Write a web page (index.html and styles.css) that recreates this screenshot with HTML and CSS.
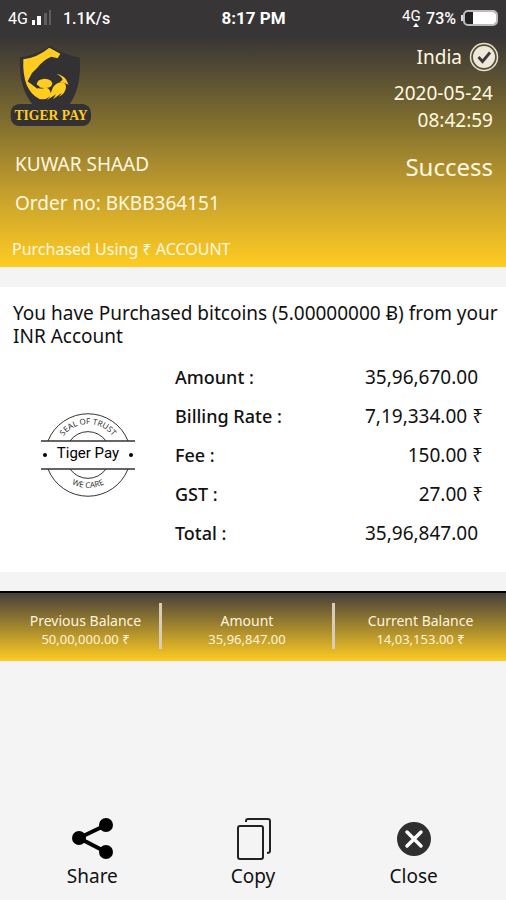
FILE: index.html
```
<!DOCTYPE html>
<html lang="en">
  <head>
    <meta charset="utf-8">
    <meta name="viewport" content="width=device-width, initial-scale=1">
    <title>Tiger Pay</title>
    <link rel="stylesheet" href="styles.css">
  </head>
  <body>
    <header class="header">
      <div class="statusbar">
        <div class="status-left">
          <span class="network">4G</span>
          <svg class="signal" width="22" height="18" viewBox="0 0 22 18">
            <path d="M1 11h3v5H1zM6 7h4v9H6z" fill="#fff"/>
            <path d="M13 4h3v12h-3zM18 1h2v15h-2z" fill="#5c6060"/>
          </svg>
          <span>1.1K/s</span>
        </div>
        <div class="clock">8:17 PM</div>
        <div class="status-right">
          <svg width="20" height="24" viewBox="0 0 20 24">
            <text x="0" y="15" class="network-small">4G</text>
            <path d="M14 17l3 4h-6z" fill="#fff"/>
          </svg>
          <span>73%</span>
          <svg width="39" height="18" viewBox="0 0 39 18">
            <path d="M2 6v6" stroke="#ddd" stroke-width="2"/>
            <rect x="4" y="2" width="33" height="14" rx="4" fill="#222" stroke="#bbb" stroke-width="2"/>
            <path d="M13 3h20q3 0 3 3v6q0 3-3 3H13z" fill="#fff"/>
          </svg>
        </div>
      </div>

      <div class="summary">
        <div class="customer">
          <svg class="logo" width="82" height="82" viewBox="0 0 246 246" role="img" aria-label="Tiger Pay">
            <path d="M121 1Q158 30 209 37Q216 132 174 184H72Q24 130 30 37Q83 30 121 1z" fill="#333133"/>
            <path d="M118 8L151 26L143 40L124 35Q98 46 82 68L66 84L53 109L84 129Q92 132 103 129Q114 127 119 135L122 144L129 127Q138 113 153 112Q169 112 168 128Q166 145 147 155L156 143L129 163L138 148L110 166L121 154Q107 166 88 162Q36 137 40 43Q83 37 118 8z" fill="#fc2"/>
            <path d="M80 119Q80 103 103 101Q126 102 127 116Q124 130 103 129Q92 129 87 126z" fill="#fc2"/>
            <path d="M53 109L82 131L89 124L79 119L82 107z" fill="#333133"/>
            <path d="M139 87Q157 89 168 103L176 119L162 113L149 112L158 104Q153 92 139 87z" fill="#fc2"/>
            <rect x="2" y="177" width="241" height="66" rx="26" fill="#333133"/>
            <text x="123" y="225" text-anchor="middle" class="logo-text">TIGER PAY</text>
          </svg>
          <p class="name">KUWAR SHAAD</p>
          <p class="order">Order no: BKBB364151</p>
        </div>
        <div class="details">
          <div class="country">
            India
            <svg width="30" height="30" viewBox="0 0 30 30">
              <circle cx="15" cy="15" r="13.500" fill="#55502f" stroke="#e6dfd3" stroke-width="1.500"/>
              <circle cx="15" cy="15" r="11" fill="#eee7dc"/>
              <path d="M9.500 15l4 4.500 7.500-9" fill="none" stroke="#3b3837" stroke-width="2.800"/>
            </svg>
          </div>
          <p class="date">2020-05-24</p>
          <p class="date">08:42:59</p>
          <p class="result">Success</p>
        </div>
      </div>
      <p class="method">Purchased Using ₹ ACCOUNT</p>
    </header>

    <main class="receipt">
      <p class="message">You have Purchased bitcoins (5.00000000 Ƀ) from your INR Account</p>
      <div class="breakdown">
        <svg class="seal" width="98" height="92" viewBox="0 0 98 92" role="img" aria-label="Seal of trust">
          <defs>
            <path id="arc-top" d="M18 46a31 31 0 0 1 62 0"/>
            <path id="arc-bottom" d="M13 43a36 36 0 0 0 72 0"/>
          </defs>
          <g fill="none" stroke="#333">
            <path d="M9 32a43 43 0 0 1 80 0M9 60a43 43 0 0 0 80 0"/>
            <path d="M31 32a22 22 0 0 1 36 0M31 60a22 22 0 0 0 36 0"/>
            <path d="M2 32h94M2 60h94" stroke-width="1.500"/>
          </g>
          <circle cx="6" cy="46" r="2"/>
          <circle cx="92" cy="46" r="2"/>
          <text x="49" y="49" text-anchor="middle" class="seal-name">Tiger Pay</text>
          <text class="seal-text"><textPath href="#arc-top" startOffset="50%" text-anchor="middle">SEAL OF TRUST</textPath></text>
          <text class="seal-text"><textPath href="#arc-bottom" startOffset="50%" text-anchor="middle">WE CARE</textPath></text>
        </svg>
        <table class="amounts">
          <tr><th scope="row">Amount :</th><td>35,96,670.00&nbsp;</td></tr>
          <tr><th scope="row">Billing Rate :</th><td>7,19,334.00 ₹</td></tr>
          <tr><th scope="row">Fee :</th><td>150.00 ₹</td></tr>
          <tr><th scope="row">GST :</th><td>27.00 ₹</td></tr>
          <tr><th scope="row">Total :</th><td>35,96,847.00&nbsp;</td></tr>
        </table>
      </div>
    </main>

    <section class="balances">
      <div class="balance">
        <h2>Previous Balance</h2>
        <p>50,00,000.00 ₹</p>
      </div>
      <div class="balance">
        <h2>Amount</h2>
        <p>35,96,847.00</p>
      </div>
      <div class="balance">
        <h2>Current Balance</h2>
        <p>14,03,153.00 ₹</p>
      </div>
    </section>

    <footer class="actions">
      <button type="button" class="action">
        <svg width="44" height="44" viewBox="0 0 44 44">
          <path d="M36 9L9 22l27 14" fill="none" stroke="#000" stroke-width="4"/>
          <circle cx="36" cy="9" r="7"/>
          <circle cx="9" cy="22" r="7"/>
          <circle cx="36" cy="36" r="7"/>
        </svg>
        Share
      </button>
      <button type="button" class="action">
        <svg width="44" height="44" viewBox="0 0 44 44" fill="none" stroke="#222" stroke-width="2">
          <rect x="7" y="10" width="25" height="33" rx="2"/>
          <path d="M15 6V5q0-2 2-2h20q2 0 2 2v30q0 2-3 2"/>
        </svg>
        Copy
      </button>
      <button type="button" class="action">
        <svg width="44" height="44" viewBox="0 0 44 44">
          <circle cx="22" cy="23" r="17" fill="#2f2f2f"/>
          <path d="M15 16l14 14M29 16L15 30" stroke="#fff" stroke-width="3.500" stroke-linecap="round"/>
        </svg>
        Close
      </button>
    </footer>
  </body>
</html>
```
FILE: styles.css
```
* {
  box-sizing: border-box;
}

body {
  display: flex;
  flex-direction: column;
  min-height: 100vh;
  margin: 0;
  background: #f4f4f4;
  color: #111;
  font-family: "Noto Sans", sans-serif;
  font-size: 19px;
}

p, h2 {
  margin: 0;
}

svg {
  flex: none;
}

/* Header */
.header {
  background: linear-gradient(#373536 36px, #83702f 125px, #c29d2e 190px, #fc2 100%);
  color: #fff8e0;
}

.statusbar {
  display: grid;
  grid-template-columns: 1fr auto 1fr;
  align-items: center;
  height: 36px;
  padding: 0 7px 0 8px;
  color: #fff;
  font-family: Roboto, sans-serif;
  font-size: 16px;
  font-weight: 500;
}

.status-left, .status-right {
  display: flex;
  align-items: center;
  gap: 4px;
}

.status-left {
  gap: 3px;
}

.status-right {
  justify-content: flex-end;
}

.signal {
  margin-right: 7px;
}

.network {
  font-weight: 400;
}

.network-small {
  fill: #fff;
  font-size: 15px;
  font-weight: 400;
}

.clock {
  font-size: 17px;
  font-weight: 700;
}

.summary {
  display: flex;
  justify-content: space-between;
  padding: 6px 7px 0 10px;
}

.logo {
  display: block;
  margin-top: 3px;
}

.logo-text {
  fill: #fc2;
  font: bold 41px "Liberation Serif", serif;
}

.name, .order {
  margin-left: 5px;
  line-height: 39px;
}

.name {
  margin-top: 18px;
}

.details {
  text-align: right;
}

.country {
  display: flex;
  align-items: center;
  justify-content: flex-end;
  gap: 7px;
  height: 30px;
}

.details p {
  padding-right: 6px;
}

.date {
  line-height: 27px;
}

.country + .date {
  margin-top: 8px;
}

.result {
  margin-top: 15px;
  font-size: 24px;
  line-height: 36px;
}

.method {
  padding: 14px 12px 6px;
  font-size: 16px;
  line-height: 24px;
}

/* Receipt */
.receipt {
  margin: 20px 0 19px;
  padding: 15px 0 20px 13px;
  background: #fff;
}

.message {
  line-height: 23px;
}

.breakdown {
  display: flex;
  align-items: center;
  gap: 38px;
  margin: 9px 23px 0 26px;
}

.amounts {
  flex: 1;
  border-collapse: collapse;
}

.amounts th, .amounts td {
  height: 39px;
  padding: 0;
}

.amounts th {
  font-size: 18px;
  font-weight: 500;
  text-align: left;
}

.amounts td {
  text-align: right;
}

.seal-name {
  font: 15px Roboto, sans-serif;
}

.seal-text {
  fill: #333;
  font-size: 8px;
}

/* Balances */
.balances {
  display: grid;
  grid-template-columns: 150fr 173fr 171fr;
  padding: 10px 0 12px 12px;
  border-top: 2px solid #000;
  background: linear-gradient(#46403a, #fc2);
  color: #fff4dc;
  text-align: center;
}

.balance {
  padding-top: 8px;
}

.balance:not(:last-child) {
  border-right: 3px solid #d9cdb8;
}

.balance h2 {
  font-size: 14px;
  font-weight: 400;
  line-height: 19px;
}

.balance p {
  font-size: 13px;
  line-height: 19px;
}

/* Bottom buttons */
.actions {
  display: grid;
  grid-template-columns: repeat(3, 1fr);
  margin-top: auto;
  padding: 0 12px 10px;
}

.action {
  display: flex;
  flex-direction: column;
  align-items: center;
  gap: 2px;
  padding: 0;
  border: 0;
  background: none;
  color: inherit;
  font: inherit;
  line-height: 28px;
  cursor: pointer;
}
```
